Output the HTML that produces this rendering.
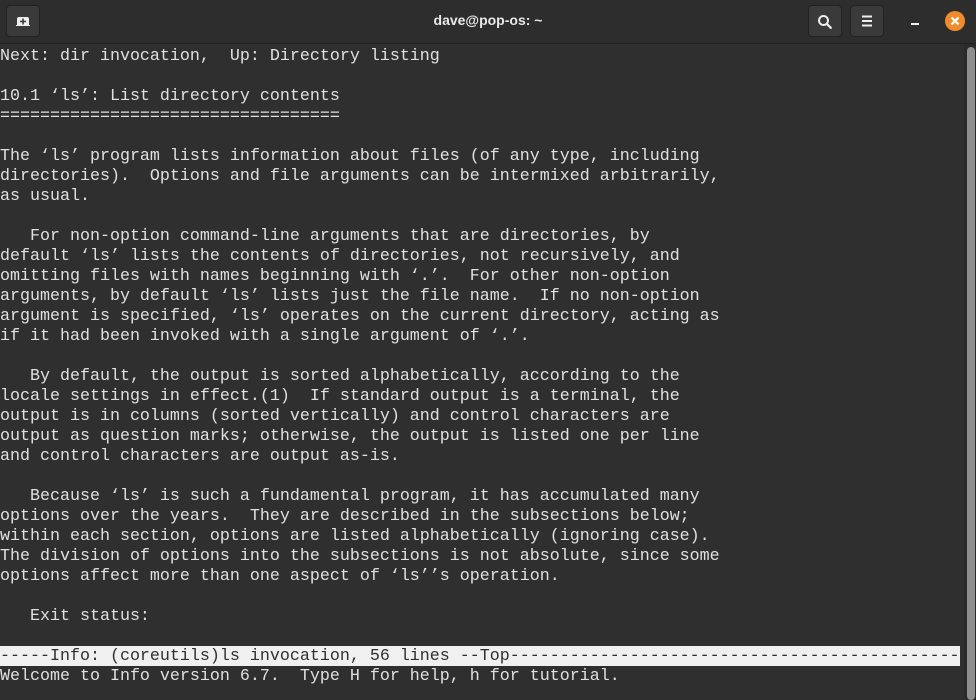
<!DOCTYPE html>
<html><head><meta charset="utf-8"><style>
html,body{margin:0;padding:0;background:#2f2f2f;width:976px;height:700px;overflow:hidden}
.hdr{position:absolute;left:0;top:0;width:976px;height:44px;background:#2d2d2d;border-bottom:1px solid #1f1f1f;box-sizing:border-box}
.btn{position:absolute;top:5px;width:34px;height:32px;background:#3a3a3a;border:1px solid #222;border-radius:4px;box-sizing:border-box}
.title{position:absolute;left:0;width:976px;top:12px;text-align:center;color:#e8e8e8;font:bold 14px "Liberation Sans",sans-serif}
pre{position:absolute;left:0;top:47px;margin:0;font:16.67px/20px "Liberation Mono",monospace;color:#e0e0e0;white-space:pre}
.status{position:absolute;left:0;top:646px;width:960px;height:20px;background:#f0f0f0}
.track{position:absolute;left:964px;top:44px;width:12px;height:656px;background:#2a2a2a}
.thumb{position:absolute;left:967px;top:47px;width:8px;height:653px;background:#8e8e8e;border-radius:4px}
</style></head><body>
<div class="hdr">
<div class="btn" style="left:6px"><svg width="34" height="32" viewBox="0 0 34 32" style="position:absolute;left:-1px;top:-1px"><path d="M11 14a2 2 0 0 1 2-2h8a2 2 0 0 1 2 2v6h1v1H10v-1h1z" fill="#eee"/><path d="M17 13.5v6M14 16.5h6" stroke="#3a3a3a" stroke-width="1.6"/></svg></div>
<div class="title">dave@pop-os: ~</div>
<div class="btn" style="left:808px"><svg width="34" height="32" viewBox="0 0 34 32" style="position:absolute;left:-1px;top:-1px"><circle cx="15.5" cy="15.5" r="4.5" fill="none" stroke="#eee" stroke-width="2"/><path d="M18.8 18.8l4 4" stroke="#eee" stroke-width="2.2" stroke-linecap="round"/></svg></div>
<div class="btn" style="left:850px"><svg width="34" height="32" viewBox="0 0 34 32" style="position:absolute;left:-1px;top:-1px"><path d="M12 11.5h10M12 16h10M12 20.5h10" stroke="#eee" stroke-width="2"/></svg></div>
<div style="position:absolute;left:911px;top:23px;width:8px;height:2px;background:#eee"></div>
<svg width="20" height="20" style="position:absolute;left:945px;top:11px"><circle cx="10" cy="10" r="10" fill="#f08c2c"/><path d="M6.5 6.5l7 7M13.5 6.5l-7 7" stroke="#fff" stroke-width="2.2"/></svg>
</div>
<div class="status"></div>
<div class="track"></div><div class="thumb"></div>
<pre>Next: dir invocation,  Up: Directory listing

10.1 ‘ls’: List directory contents
==================================

The ‘ls’ program lists information about files (of any type, including
directories).  Options and file arguments can be intermixed arbitrarily,
as usual.

   For non-option command-line arguments that are directories, by
default ‘ls’ lists the contents of directories, not recursively, and
omitting files with names beginning with ‘.’.  For other non-option
arguments, by default ‘ls’ lists just the file name.  If no non-option
argument is specified, ‘ls’ operates on the current directory, acting as
if it had been invoked with a single argument of ‘.’.

   By default, the output is sorted alphabetically, according to the
locale settings in effect.(1)  If standard output is a terminal, the
output is in columns (sorted vertically) and control characters are
output as question marks; otherwise, the output is listed one per line
and control characters are output as-is.

   Because ‘ls’ is such a fundamental program, it has accumulated many
options over the years.  They are described in the subsections below;
within each section, options are listed alphabetically (ignoring case).
The division of options into the subsections is not absolute, since some
options affect more than one aspect of ‘ls’’s operation.

   Exit status:

<span style="color:#2f2f2f">-----Info: (coreutils)ls invocation, 56 lines --Top---------------------------------------------</span>
Welcome to Info version 6.7.  Type H for help, h for tutorial.</pre>
</body></html>
